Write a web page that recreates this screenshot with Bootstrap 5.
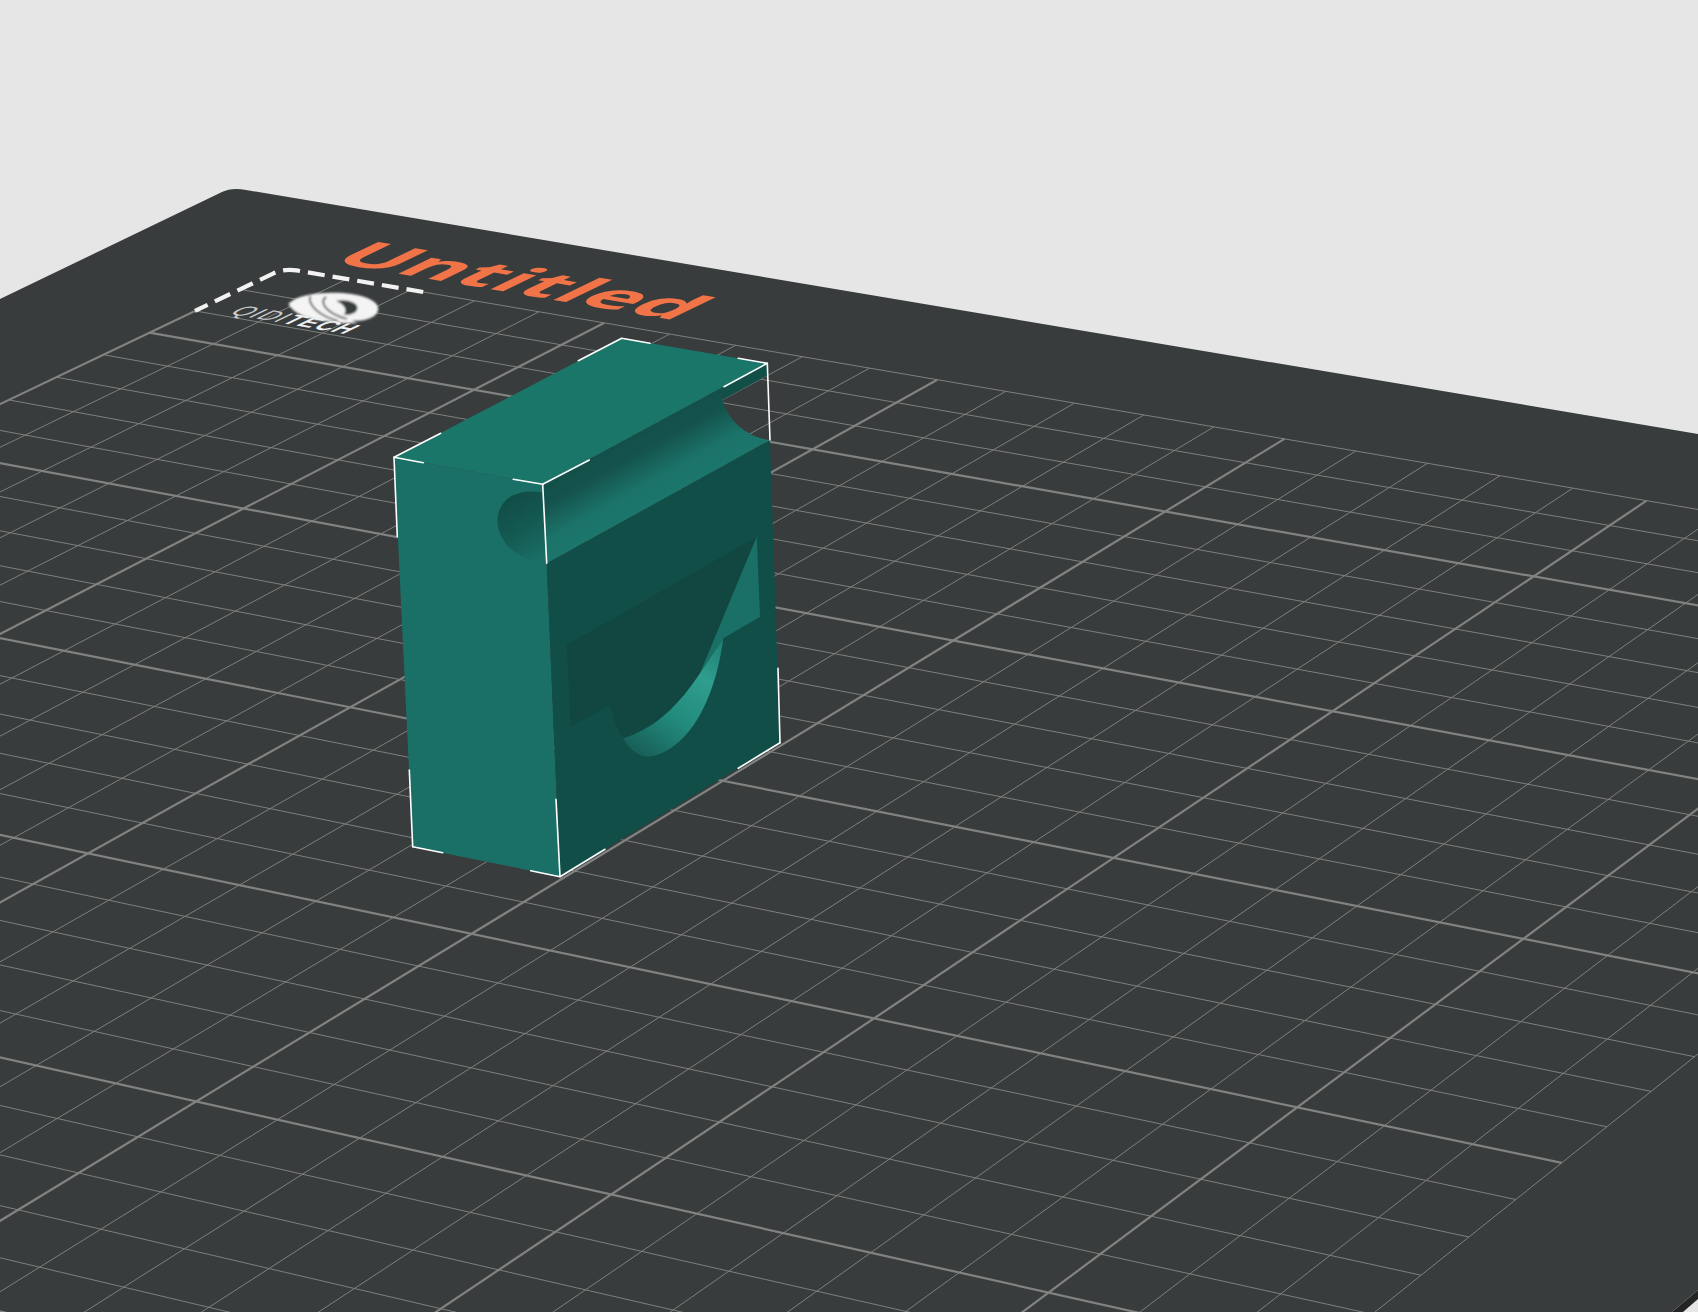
<!DOCTYPE html>
<html lang="en">
<head>
    <meta charset="UTF-8">
    <meta name="viewport" content="width=device-width, initial-scale=1.0">
    <title>Untitled - Plate view</title>
    <link href="https://cdn.jsdelivr.net/npm/bootstrap@5.3.0/dist/css/bootstrap.min.css" rel="stylesheet">
    <style>
        body {
            background: #e6e6e6;
            overflow: hidden;
        }
        .scene {
            width: 1698px;
            height: 1312px;
        }
        .bed { fill: #383c3d; }
        .bed-edge { fill: #232525; }
        .grid-line { stroke: #7d807c; stroke-width: 1; fill: none; }
        .grid-line.major { stroke: #808380; stroke-width: 2.2; }
        .dash-line { stroke: #f2f2f2; stroke-width: 4.2; fill: none; stroke-dasharray: 17 8; }
        .plate-name {
            fill: #f07448;
            font-family: "Open Sans", sans-serif;
            font-weight: 700;
        }
        .logo-name {
            fill: #c9caca;
            font-family: "Liberation Sans", sans-serif;
            font-weight: 400;
        }
        .logo-name tspan { fill: #f0f0f0; font-weight: 700; }
        .bbox { stroke: #fff; stroke-width: 1.6; fill: none; stroke-linecap: round; }
        .face-top { fill: #1b766a; }
        .face-left { fill: #1a7067; }
        .face-right { fill: #124e48; }
        .face-inner { fill: #124640; }
    </style>
</head>
<body>
    <div class="scene position-relative">
        <svg id="plate" class="d-block" width="1698" height="1312" viewBox="0 0 1698 1312" xmlns="http://www.w3.org/2000/svg">
            <defs>
                <linearGradient id="grooveShade" gradientUnits="userSpaceOnUse" x1="593" y1="455" x2="628" y2="518">
                    <stop offset="0" stop-color="#134f49"/>
                    <stop offset="0.3" stop-color="#14544d"/>
                    <stop offset="0.7" stop-color="#1b7268"/>
                    <stop offset="1" stop-color="#1c766b"/>
                </linearGradient>
                <linearGradient id="notchShade" gradientUnits="userSpaceOnUse" x1="505" y1="505" x2="540" y2="562">
                    <stop offset="0" stop-color="#124e48"/>
                    <stop offset="0.45" stop-color="#145a52"/>
                    <stop offset="1" stop-color="#1a7067"/>
                </linearGradient>
                <linearGradient id="scoopShade" gradientUnits="userSpaceOnUse" x1="723" y1="640" x2="640" y2="755">
                    <stop offset="0" stop-color="#1e7d72"/>
                    <stop offset="0.3" stop-color="#2f9e8e"/>
                    <stop offset="0.65" stop-color="#228a7c"/>
                    <stop offset="1" stop-color="#185f58"/>
                </linearGradient>
                <filter id="soft"><feGaussianBlur stdDeviation="0.9"/></filter>
            </defs>

            <!-- plate -->
            <path class="bed-edge" d="M1672 1312 L1698 1290 V1299 L1683 1312 Z"/>
            <path class="bed" d="M0 299 L222 192 Q232 187 246 190 L1698 434 V1290 L1672 1312 H0 Z"/>
            <g id="grid"></g>
            <path id="dashes" class="dash-line"/>

            <!-- logo -->
            <g filter="url(#soft)">
                <path fill="#f4f4f4" d="M288.3 304 C295 296.7 310 292.7 333 292.7 C360 292.7 379 300 378.3 309.3 C377.3 318.3 363 321.7 351.7 320.7 L358 323.3 C340 323.3 317 321.7 303 316 C296 313 291 309 288.3 304 Z"/>
                <path fill="#383c3d" d="M336 301 C345 298.5 358 302 357.5 308 C357 313.5 350 315.5 344 314.5 C348 310 344 304 336 301 Z"/>
                <path fill="none" stroke="#4a4d4d" stroke-width="1.8" d="M310 296 C308 306 320 316 338 321"/>
                <path fill="none" stroke="#4a4d4d" stroke-width="1.8" d="M326 297 C318 303 328 314 347 319"/>
            </g>
            <text id="logoName" class="logo-name" font-size="100" letter-spacing="6">QIDI<tspan>TECH</tspan></text>
            <text id="plateName" class="plate-name" font-size="100">Untitled</text>

            <!-- part -->
            <path class="face-left" d="M394 457.3 L542.7 484.3 L546.7 563.3 L560 876.7 L412.7 846.7 Z"/>
            <path class="face-right" d="M546.7 563.3 L770 440 L780 742.7 L560 876.7 Z"/>
            <path class="face-inner" d="M756.7 536.7 L566.7 645 L570.7 726.7 L610 705 C613.3 720 618.3 731.7 623.3 738.3 C656.7 728.3 680 703.3 700 673.3 Z"/>
            <path class="face-left" d="M756.7 536.7 L760 616.7 L723.3 638.3 L700 673.3 Z"/>
            <path fill="url(#scoopShade)" d="M623.3 738.3 C656.7 728.3 680 703.3 700 673.3 L723.3 638.3 C718 680 702 725 675 745 C662 755 650 758 642 756 C633 752 627 746 623.3 738.3 Z"/>
            <path fill="url(#notchShade)" d="M543.3 492.7 C533.3 490.7 513.3 490 503.3 503.3 C493.3 516.7 496.7 533.3 508.3 546.7 C518.3 556.7 533.3 561.7 546.7 563.3 Z"/>
            <path fill="url(#grooveShade)" d="M542.7 484.3 L723.3 386.7 L722.3 400 C726.7 416.7 743.3 436.7 770 440 L546.7 563.3 Z"/>
            <path fill="#134f49" d="M767.3 363.3 L768.3 375 L722.3 400 L723.3 386.7 Z"/>
            <path class="face-top" d="M394 457.3 L621.7 338.3 L767.3 363.3 L723.3 386.7 L542.7 484.3 Z"/>

            <!-- bounding box corners -->
            <path class="bbox" d="M394 457.3 L423.3 462.7 M542.7 484.3 L513.3 479.3 M394 457.3 L440.7 433.3 M621.7 338.3 L578.3 360.7 M621.7 338.3 L650 343.3 M767.3 363.3 L738.3 358.3 M542.7 484.3 L589.3 460 M767.3 363.3 L724 386.7"/>
            <path class="bbox" d="M394 457.3 L397.3 536.7 M409.3 770 L412.7 846.7 M542.7 484.3 L546.7 563.3 M556 799.3 L560 876.7 M767.3 363.3 L770 440 M778 668.3 L780 742.7"/>
            <path class="bbox" d="M412.7 846.7 L442.7 852.7 M560 876.7 L530.7 870.7 M560 876.7 L605 849.3 M780 742.7 L738.3 768.3"/>
        </svg>
    </div>

    <script>
        // plate plane -> screen, u along the back edge, v towards the viewer (one unit = one grid cell)
        function project(u, v) {
            const w = 1 - 0.003954 * u - 0.00735 * v;
            return [
                (61.62 * u - 45.95 * v + 284) / w,
                (9.64 * u + 19.0 * v + 268.3) / w
            ];
        }

        const NS = 'http://www.w3.org/2000/svg';
        const CELLS_U = 28;
        const CELLS_V = 34;
        const grid = document.getElementById('grid');

        function addLine(a, b, major) {
            const line = document.createElementNS(NS, 'line');
            line.setAttribute('x1', a[0].toFixed(1));
            line.setAttribute('y1', a[1].toFixed(1));
            line.setAttribute('x2', b[0].toFixed(1));
            line.setAttribute('y2', b[1].toFixed(1));
            line.setAttribute('class', major ? 'grid-line major' : 'grid-line');
            grid.appendChild(line);
        }

        // thin lines first so the thick ones sit on top
        [false, true].forEach(major => {
            for (let u = 0; u <= CELLS_U; u++) {
                if ((u % 5 === 0) === major) {
                    addLine(project(u, u === 0 ? 2 : 0), project(u, CELLS_V), major);
                }
            }
            for (let v = 0; v <= CELLS_V; v++) {
                if ((v % 5 === 3) === major) {
                    addLine(project(v === 0 ? 2.2 : 0, v), project(CELLS_U, v), major);
                }
            }
        });

        // dashed corner around the logo
        const a = project(2.2, 0), b = project(0.2, 0), c = project(0, 0), d = project(0, 0.25), e = project(0, 2);
        document.getElementById('dashes').setAttribute('d',
            `M${a[0]} ${a[1]} L${b[0]} ${b[1]} Q${c[0]} ${c[1]} ${d[0]} ${d[1]} L${e[0]} ${e[1]}`);

        // lay a text on the plate: baseline from (u0,v0) to (u1,v0), cap top at vTop
        function layOnPlate(el, u0, u1, v0, vTop, capHeight) {
            const o = project(u0, v0), r = project(u1, v0), t = project(u0, vTop);
            const len = el.getComputedTextLength();
            const ax = (r[0] - o[0]) / len, ay = (r[1] - o[1]) / len;
            const bx = (o[0] - t[0]) / capHeight, by = (o[1] - t[1]) / capHeight;
            el.setAttribute('transform', `matrix(${ax} ${ay} ${bx} ${by} ${o[0]} ${o[1]})`);
        }

        layOnPlate(document.getElementById('plateName'), 0.35, 5.78, -0.5, -1.5, 71);
        layOnPlate(document.getElementById('logoName'), 0.45, 2.3, 1.9, 1.5, 72);
    </script>
    <script src="https://cdn.jsdelivr.net/npm/bootstrap@5.3.0/dist/js/bootstrap.bundle.min.js"></script>
</body>
</html>
